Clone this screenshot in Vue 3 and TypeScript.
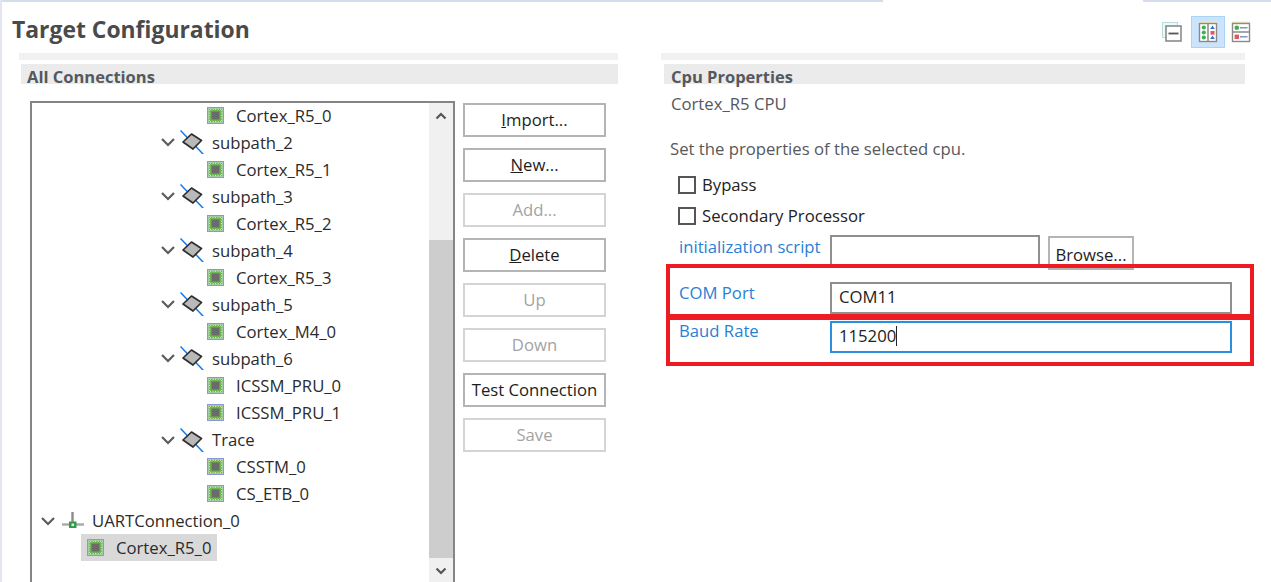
<script setup lang="ts">
interface TreeRow {
  label: string
  kind: 'cpu' | 'path' | 'conn'
  indent: number
  selected?: boolean
}

const rows: TreeRow[] = [
  { label: 'Cortex_R5_0', kind: 'cpu', indent: 175 },
  { label: 'subpath_2', kind: 'path', indent: 128 },
  { label: 'Cortex_R5_1', kind: 'cpu', indent: 175 },
  { label: 'subpath_3', kind: 'path', indent: 128 },
  { label: 'Cortex_R5_2', kind: 'cpu', indent: 175 },
  { label: 'subpath_4', kind: 'path', indent: 128 },
  { label: 'Cortex_R5_3', kind: 'cpu', indent: 175 },
  { label: 'subpath_5', kind: 'path', indent: 128 },
  { label: 'Cortex_M4_0', kind: 'cpu', indent: 175 },
  { label: 'subpath_6', kind: 'path', indent: 128 },
  { label: 'ICSSM_PRU_0', kind: 'cpu', indent: 175 },
  { label: 'ICSSM_PRU_1', kind: 'cpu', indent: 175 },
  { label: 'Trace', kind: 'path', indent: 128 },
  { label: 'CSSTM_0', kind: 'cpu', indent: 175 },
  { label: 'CS_ETB_0', kind: 'cpu', indent: 175 },
  { label: 'UARTConnection_0', kind: 'conn', indent: 8 },
  { label: 'Cortex_R5_0', kind: 'cpu', indent: 49, selected: true },
]

interface ActionButton {
  key: string
  rest: string
  disabled?: boolean
}

const buttons: ActionButton[] = [
  { key: 'I', rest: 'mport...' },
  { key: 'N', rest: 'ew...' },
  { key: '', rest: 'Add...', disabled: true },
  { key: 'D', rest: 'elete' },
  { key: '', rest: 'Up', disabled: true },
  { key: '', rest: 'Down', disabled: true },
  { key: '', rest: 'Test Connection' },
  { key: '', rest: 'Save', disabled: true },
]

// little green pins round the cpu chip
const pins = [3, 5.5, 8, 10.5, 13]
</script>

<template>
  <div class="page">
    <div class="top-strip">
      <div class="strip-left"></div>
      <div class="strip-tab"></div>
      <div class="strip-right"></div>
    </div>

    <header class="title-row">
      <h1 class="title">Target Configuration</h1>
      <div class="toolbar">
        <svg class="tool-collapse" viewBox="0 0 20 20" width="20" height="20">
          <rect x="0.500" y="0.500" width="15" height="15" fill="#eef8f7" stroke="#b5dfdc" />
          <rect x="4" y="4" width="15" height="15" fill="#fff" stroke="#8a8a8a" stroke-width="1.6" />
          <path d="M6.500 11.500h10" stroke="#555" stroke-width="1.800" />
        </svg>
        <div class="tool-active">
          <svg viewBox="0 0 20 22" width="20" height="22">
            <rect x="1" y="0.500" width="18" height="4" fill="#efe9bb" />
            <rect x="1.500" y="2.500" width="17" height="18" fill="#fff" stroke="#8a8a8a" stroke-width="1.400" />
            <path d="M10 3v17" stroke="#8a8a8a" stroke-width="1.500" />
            <circle cx="5.800" cy="6.500" r="2.100" fill="#3fb04f" />
            <circle cx="5.800" cy="11.500" r="2.100" fill="#3fb04f" />
            <circle cx="5.800" cy="16.500" r="2.100" fill="#3fb04f" />
            <path d="M14.500 4.500l2.300 3.600h-4.600z" fill="#3f6fc4" />
            <rect x="12.500" y="10" width="4" height="3.600" fill="#e2585e" />
            <path d="M14.500 14.500l2.300 3.600h-4.600z" fill="#3f6fc4" />
          </svg>
        </div>
        <svg class="tool-list" viewBox="0 0 20 22" width="20" height="22">
          <rect x="1" y="0.500" width="18" height="4" fill="#efe9bb" />
          <rect x="1.500" y="2.500" width="17" height="18" fill="#fff" stroke="#8a8a8a" stroke-width="1.400" />
          <path d="M1.500 11h17" stroke="#8a8a8a" stroke-width="1.500" />
          <circle cx="5.800" cy="6.800" r="2.300" fill="#3fb04f" />
          <path d="M9 6.800h7.500" stroke="#6f8fc9" stroke-width="1.400" />
          <rect x="3.600" y="13.600" width="4.400" height="4.400" fill="#e2585e" />
          <path d="M9 15.800h7.500" stroke="#6f8fc9" stroke-width="1.400" />
        </svg>
      </div>
    </header>

    <main class="columns">
      <section class="panel left-panel">
        <div class="pale-bar"></div>
        <h2 class="section-head">All Connections</h2>
        <div class="left-body">
          <div class="tree">
            <div class="tree-rows">
              <div v-for="(row, i) in rows" :key="i" class="tree-row" :style="{ paddingLeft: row.indent + 'px' }">
                <svg v-if="row.kind !== 'cpu'" class="chevron" viewBox="0 0 16 10" width="16" height="10">
                  <path d="M2 2l6 6 6-6" fill="none" stroke="#5c5c5c" stroke-width="2.200" />
                </svg>

                <svg v-if="row.kind === 'path'" class="path-icon" viewBox="0 0 24 24" width="24" height="24">
                  <path d="M0.500 0.500l23 24" stroke="#0f78ee" stroke-width="1.500" />
                  <path d="M3 12l8.500-8 10 6.500-8.500 8.500z" fill="#b9b9b9" stroke="#2e2e2e" stroke-width="1.700" stroke-linejoin="round" />
                </svg>

                <svg v-else-if="row.kind === 'conn'" class="conn-icon" viewBox="0 0 22 18" width="22" height="18">
                  <path d="M0 12.500h22" stroke="#a9a9a9" stroke-width="2.400" />
                  <path d="M10.500 0v10" stroke="#8c8c8c" stroke-width="2.400" />
                  <rect x="7" y="9.500" width="7.500" height="6.500" fill="#2f9c47" />
                  <rect x="9.500" y="11.500" width="2.600" height="2.600" fill="#d9ecd9" />
                </svg>

                <div class="row-inner" :class="{ selected: row.selected }">
                  <svg v-if="row.kind === 'cpu'" class="cpu-icon" viewBox="0 0 17 17" width="17" height="17">
                    <rect x="0.500" y="0.500" width="16" height="16" fill="#d5dcf6" stroke="#8799dc" />
                    <rect x="1.500" y="1.500" width="14" height="14" fill="#6fb84f" />
                    <template v-for="p in pins" :key="p">
                      <rect :x="p" y="2" width="1" height="1" fill="#e5e58a" />
                      <rect :x="p" y="14" width="1" height="1" fill="#e5e58a" />
                      <rect x="2" :y="p" width="1" height="1" fill="#e5e58a" />
                      <rect x="14" :y="p" width="1" height="1" fill="#e5e58a" />
                    </template>
                    <rect x="4.500" y="4.500" width="8" height="8" fill="#6b6b6b" />
                  </svg>
                  <span class="tree-label">{{ row.label }}</span>
                </div>
              </div>
            </div>
            <div class="scrollbar">
              <div class="arrow">
                <svg viewBox="0 0 12 8" width="12" height="8"><path d="M1.500 6.500L6 2l4.500 4.500" fill="none" stroke="#555" stroke-width="2.200" /></svg>
              </div>
              <div class="track"><div class="thumb"></div></div>
              <div class="arrow">
                <svg viewBox="0 0 12 8" width="12" height="8"><path d="M1.500 1.500L6 6l4.500-4.500" fill="none" stroke="#555" stroke-width="2.200" /></svg>
              </div>
            </div>
          </div>

          <div class="actions">
            <button v-for="b in buttons" :key="b.rest" class="btn" :class="{ disabled: b.disabled }" type="button">
              <u v-if="b.key">{{ b.key }}</u>{{ b.rest }}
            </button>
          </div>
        </div>
      </section>

      <section class="panel right-panel">
        <div class="pale-bar"></div>
        <h2 class="section-head">Cpu Properties</h2>
        <p class="muted sub">Cortex_R5 CPU</p>
        <p class="muted hint">Set the properties of the selected cpu.</p>

        <label class="check first"><span class="box"></span>Bypass</label>
        <label class="check"><span class="box"></span>Secondary Processor</label>

        <div class="field script-row">
          <span class="link">initialization script</span>
          <div class="input short"></div>
          <button class="btn browse" type="button">Browse...</button>
        </div>
        <div class="field com-row">
          <span class="link">COM Port</span>
          <div class="input wide">COM11</div>
        </div>
        <div class="field baud-row">
          <span class="link">Baud Rate</span>
          <div class="input wide focus">115200<span class="caret"></span></div>
        </div>

        <div class="highlight com"></div>
        <div class="highlight baud"></div>
      </section>
    </main>
  </div>
</template>

<style>
html,
body {
  margin: 0;
  background: #fff;
  overflow: hidden;
}
</style>

<style scoped>
.page {
  width: 1271px;
  height: 582px;
  overflow: hidden;
  box-sizing: border-box;
  border-left: 2px solid #e3e6f2;
  font-family: "Open Sans", "Noto Sans", sans-serif;
  font-size: 16.7px;
  color: #222;
}

.top-strip {
  display: flex;
  height: 2px;
  margin-left: -2px;
}

.strip-left {
  width: 883px;
  background: #d5dcec;
}

.strip-tab {
  width: 260px;
}

.strip-right {
  flex: 1;
  background: #d5dcec;
}

.title-row {
  display: flex;
  justify-content: space-between;
  padding: 14px 20px 0 10px;
  height: 37px;
}

.title {
  margin: 0;
  font-size: 22.900px;
  font-weight: 700;
  line-height: 28px;
  color: #4a4a4a;
}

.toolbar {
  display: flex;
  align-items: center;
  height: 32px;
}

.tool-collapse {
  margin-right: 9px;
}

.tool-active {
  width: 34px;
  height: 32px;
  margin-right: 6px;
  display: flex;
  align-items: center;
  justify-content: center;
  background: #cbe4fb;
  border: 1px solid #a9d3f7;
  box-sizing: border-box;
}

.columns {
  display: flex;
}

.panel {
  display: flex;
  flex-direction: column;
}

.left-panel {
  width: 599px;
  margin-left: 17px;
}

.right-panel {
  width: 584px;
  margin-left: 43px;
  position: relative;
}

.pale-bar {
  height: 7px;
  background: #f1f1f1;
  margin-bottom: 4px;
}

.section-head {
  margin: 0 0 0 3px;
  height: 20px;
  line-height: 26px;
  font-size: 16.500px;
  font-weight: 700;
  color: #55585c;
  background: #ebebeb;
  padding-left: 6px;
}

.left-panel .section-head {
  margin-left: 2px;
}

.right-panel .section-head {
  padding-left: 7px;
}

.left-body {
  display: flex;
  margin-top: 17px;
  margin-left: 11px;
}

.tree {
  width: 425px;
  height: 485px;
  display: flex;
  box-sizing: border-box;
  border: 2px solid #858585;
  flex: none;
}

.tree-rows {
  flex: 1;
  margin-top: -1.500px;
}

.tree-row {
  display: flex;
  align-items: center;
  height: 27.060px;
}

.row-inner {
  display: flex;
  align-items: center;
  height: 100%;
}

.row-inner.selected {
  padding: 0 6px 0 6px;
  background: #d9d9d9;
}

.chevron {
  margin-right: 4px;
  flex: none;
}

.path-icon {
  margin-right: 8px;
  flex: none;
}

.conn-icon {
  margin: 0 8px 0 2px;
  flex: none;
}

.cpu-icon {
  margin-right: 12px;
  flex: none;
}

.tree-label {
  color: #2b2b2b;
}

.scrollbar {
  width: 24px;
  display: flex;
  flex-direction: column;
  background: #f0f0f0;
  flex: none;
}

.arrow {
  height: 26px;
  display: flex;
  align-items: center;
  justify-content: center;
  flex: none;
}

.track {
  flex: 1;
  padding-top: 111px;
}

.thumb {
  height: 318px;
  background: #cdcdcd;
}

.actions {
  display: flex;
  flex-direction: column;
  gap: 11px;
  margin-left: 8px;
  margin-top: 2px;
}

.btn {
  width: 143px;
  height: 34px;
  padding: 0 0 2px;
  background: #fff;
  border: 2px solid #b4b4b4;
  font-family: inherit;
  font-size: 16.700px;
  color: #1d1d1d;
}

.btn.disabled {
  border-color: #d4d4d4;
  color: #a3a3a3;
}

.muted {
  margin: 0;
  color: #55585c;
}

.sub {
  margin: 10px 0 0 10px;
  line-height: 20px;
}

.hint {
  margin: 25px 0 0 9px;
  line-height: 20px;
}

.check {
  display: flex;
  align-items: center;
  height: 20px;
  margin: 11px 0 0 17px;
  line-height: 18px;
}

.check.first {
  margin-top: 16px;
}

.box {
  width: 14px;
  height: 14px;
  border: 2px solid #555;
  margin-right: 6px;
  background: #fff;
  flex: none;
}

.field {
  display: flex;
  align-items: flex-start;
  margin-left: 18px;
}

.script-row {
  margin-top: 9px;
}

.com-row {
  margin-top: 12px;
}

.baud-row {
  margin-top: 7px;
}

.link {
  width: 151px;
  flex: none;
  color: #2a7fd4;
  line-height: 20px;
}

.script-row .link {
  margin-top: 2px;
}

.com-row .link {
  margin-top: 1px;
}

.input {
  box-sizing: border-box;
  background: #fff;
  border: 2px solid #8f8f8f;
  padding-left: 7px;
}

.short {
  width: 210px;
  height: 32px;
}

.browse {
  width: 86px;
  margin: 1px 0 0 8px;
  padding: 2px 0 0;
}

.highlight {
  position: absolute;
  left: 5px;
  width: 588px;
  box-sizing: border-box;
  border: 4px solid #ed1c24;
}

.com {
  top: 211px;
  height: 54px;
}

.baud {
  top: 263px;
  height: 50px;
}

.wide {
  width: 402px;
  height: 32px;
  line-height: 26px;
}

.focus {
  border-color: #2b8fe0;
}

.caret {
  display: inline-block;
  width: 1px;
  height: 20px;
  background: #222;
  vertical-align: -4px;
}
</style>
